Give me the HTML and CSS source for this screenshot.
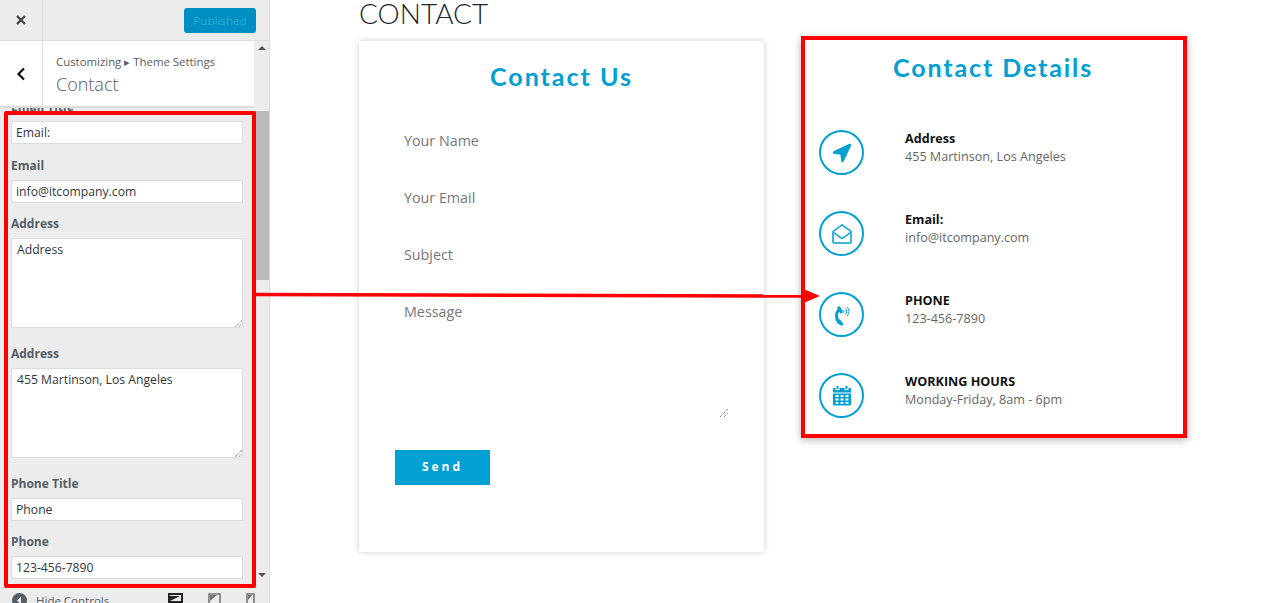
FILE: index.html
```html
<!DOCTYPE html>
<html lang="en">
<head>
    <meta charset="UTF-8">
    <title>Customizing Contact</title>
    <link rel="stylesheet" href="styles.css">
</head>
<body>
    <aside class="sidebar">
        <div class="topbar">
            <button class="close-btn">
                <svg width="12" height="12" viewBox="0 0 12 12"><path d="M2 2l8 8M10 2l-8 8" stroke="#444" stroke-width="2.2" fill="none"/></svg>
            </button>
            <div class="publish-wrap"><span class="publish-btn">Published</span></div>
        </div>
        <div class="panel">
            <div class="panel-main">
                <div class="section-head">
                    <div class="back-btn">
                        <svg width="10" height="14" viewBox="0 0 10 14"><path d="M8 1.5L2.5 7 8 12.5" stroke="#111" stroke-width="2.2" fill="none"/></svg>
                    </div>
                    <div class="section-title">
                        <div class="crumb">Customizing &#9656; Theme Settings</div>
                        <div class="section-name">Contact</div>
                    </div>
                </div>
                <div class="fields">
                    <label class="field-label">Email Title</label>
                    <div class="text-input">Email:</div>
                    <label class="field-label">Email</label>
                    <div class="text-input">info@itcompany.com</div>
                    <label class="field-label tight">Address</label>
                    <div class="text-area">Address
                        <svg class="grip" width="7" height="7" viewBox="0 0 8 8"><path d="M0 8l8-8M4 8l4-4" stroke="#555" stroke-dasharray="1 1" fill="none"/></svg>
                    </div>
                    <label class="field-label">Address</label>
                    <div class="text-area">455 Martinson, Los Angeles
                        <svg class="grip" width="7" height="7" viewBox="0 0 8 8"><path d="M0 8l8-8M4 8l4-4" stroke="#555" stroke-dasharray="1 1" fill="none"/></svg>
                    </div>
                    <label class="field-label">Phone Title</label>
                    <div class="text-input">Phone</div>
                    <label class="field-label tight">Phone</label>
                    <div class="text-input">123-456-7890</div>
                </div>
            </div>
            <div class="scrollbar">
                <span class="arrow-up"></span>
                <div class="scroll-track"><div class="scroll-thumb"></div></div>
                <span class="arrow-down"></span>
            </div>
        </div>
        <div class="sidebar-foot">
            <div class="hide-controls">
                <svg width="15" height="15" viewBox="0 0 15 15"><circle cx="7.5" cy="7.5" r="7.5" fill="#555d66"/><path d="M9 3.5L5 7.5l4 4z" fill="#eee"/></svg>
                <span>Hide Controls</span>
            </div>
            <div class="devices">
                <svg width="15" height="12" viewBox="0 0 15 12"><path d="M1 1h13v8H1z" fill="none" stroke="#222" stroke-width="2"/><path d="M2 8l10-5H2z" fill="#222"/><path d="M0 10.5h15" stroke="#222" stroke-width="2"/></svg>
                <svg width="13" height="12" viewBox="0 0 13 12"><path d="M1 1h11v10H1z" fill="none" stroke="#777" stroke-width="1.6"/><path d="M2 8l7-6H2z" fill="#777"/></svg>
                <svg width="9" height="12" viewBox="0 0 9 12"><path d="M1 1h7v10H1z" fill="none" stroke="#777" stroke-width="1.6"/><path d="M2 7l4-5H2z" fill="#777"/></svg>
            </div>
        </div>
    </aside>

    <main class="preview">
        <h2 class="page-title">CONTACT</h2>
        <div class="cards">
            <section class="form-card">
                <h3 class="card-title">Contact Us</h3>
                <div class="form-row">Your Name</div>
                <div class="form-row">Your Email</div>
                <div class="form-row">Subject</div>
                <div class="form-message">
                    Message
                    <svg class="grip" width="8" height="8" viewBox="0 0 8 8"><path d="M0 8l8-8M4 8l4-4" stroke="#555" stroke-dasharray="1 1" fill="none"/></svg>
                </div>
                <div class="send-btn">Send</div>
            </section>
            <section class="details-card">
                <h3 class="card-title">Contact Details</h3>
                <div class="detail-row">
                    <div class="icon-ring">
                        <svg width="22" height="22" viewBox="0 0 22 22"><path d="M19 3L3 10.500 10.500 11.500 11.500 19z" fill="#00a0d2" stroke="#00a0d2" stroke-width="2.500" stroke-linejoin="round"/></svg>
                    </div>
                    <div class="detail-text"><div class="detail-name">Address</div><div class="detail-value">455 Martinson, Los Angeles</div></div>
                </div>
                <div class="detail-row">
                    <div class="icon-ring">
                        <svg width="22" height="22" viewBox="0 0 22 22" fill="none" stroke="#00a0d2" stroke-width="1.500"><path d="M2 8.500L11 2l9 6.500V19a1 1 0 0 1-1 1H3a1 1 0 0 1-1-1z"/><path d="M2.500 9.500L11 15.500l8.500-6"/></svg>
                    </div>
                    <div class="detail-text"><div class="detail-name">Email:</div><div class="detail-value">info@itcompany.com</div></div>
                </div>
                <div class="detail-row">
                    <div class="icon-ring">
                        <svg width="22" height="22" viewBox="0 0 22 22" fill="none" stroke="#00a0d2"><path d="M8.500 5.500C4.500 8 4.500 16 9 19.500" stroke-width="3"/><path d="M8 4l2 3.500M8 17l2.500 3" stroke-width="3.400" stroke-linecap="round"/><path d="M12.500 6c.8.8.8 2 0 2.800M14.300 4.500c1.700 1.600 1.700 4.400 0 6M16 3c2.600 2.400 2.600 6.600 0 9" stroke-width="1"/></svg>
                    </div>
                    <div class="detail-text"><div class="detail-name">PHONE</div><div class="detail-value">123-456-7890</div></div>
                </div>
                <div class="detail-row">
                    <div class="icon-ring">
                        <svg width="20" height="20" viewBox="0 0 20 20"><path d="M4.500 0h2v3h-2zM13.500 0h2v3h-2z" fill="#00a0d2"/><path d="M1 2.500A1 1 0 0 1 2 2h1.500v2h4V2h5v2h4V2H18a1 1 0 0 1 1 1v3.500H1zM1 7.500h18V18a1.500 1.500 0 0 1-1.500 1.500h-15A1.500 1.500 0 0 1 1 18z" fill="#00a0d2"/><path d="M3.500 9h3v2h-3zM8.500 9h3v2h-3zM13.500 9h3v2h-3zM3.500 12.500h3v2h-3zM8.500 12.500h3v2h-3zM13.500 12.500h3v2h-3zM3.500 16h3v1.800h-3zM8.500 16h3v1.800h-3zM13.500 16h3v1.800h-3z" fill="#fff"/></svg>
                    </div>
                    <div class="detail-text"><div class="detail-name">WORKING HOURS</div><div class="detail-value">Monday-Friday, 8am - 6pm</div></div>
                </div>
            </section>
        </div>
    </main>

    <!-- red annotation on top of the screenshot -->
    <div class="note-box"></div>
    <svg class="note-arrow" width="570" height="20" viewBox="0 0 570 20"><path d="M0 8.500L550 10" stroke="#f00" stroke-width="3.500" fill="none"/><path d="M546 2l19 8-19 8z" fill="#f00"/></svg>
</body>
</html>
```

FILE: styles.css
```css
* {
    box-sizing: border-box;
}

html, body {
    height: 100%;
}

body {
    margin: 0;
    display: flex;
    height: 603px;
    overflow: hidden;
    background: #fff;
    font-family: "Open Sans", sans-serif;
    color: #444;
}

/* customizer sidebar */
.sidebar {
    width: 270px;
    flex-shrink: 0;
    display: flex;
    flex-direction: column;
    background: #ececec;
    border-right: 1px solid #ddd;
    font-size: 12.5px;
}

.topbar {
    height: 41px;
    display: flex;
    flex-shrink: 0;
    border-bottom: 1px solid #ddd;
}

.close-btn {
    width: 43px;
    padding: 0;
    border: 0;
    border-right: 1px solid #ddd;
    background: transparent;
    display: flex;
    align-items: center;
    justify-content: center;
}

.publish-wrap {
    flex: 1;
    display: flex;
    justify-content: flex-end;
    padding: 8px 13px 0 0;
}

.publish-btn {
    width: 72px;
    height: 25px;
    background: #008ec2;
    border-radius: 3px;
    color: #2fabd4;
    font-size: 11.6px;
    line-height: 25px;
    text-align: center;
}

.panel {
    flex: 1;
    display: flex;
    min-height: 0;
    overflow: hidden;
}

.panel-main {
    width: 254px;
    flex-shrink: 0;
}

.section-head {
    position: relative;
    z-index: 1;
    height: 67px;
    display: flex;
    background: #fff;
    border-bottom: 2px solid #ddd;
}

.back-btn {
    width: 43px;
    flex-shrink: 0;
    display: flex;
    align-items: center;
    justify-content: center;
    border-right: 1px solid #ddd;
}

.section-title {
    padding: 12px 0 0 13px;
}

.crumb {
    font-size: 11.4px;
    line-height: 18px;
    color: #555d66;
}

.section-name {
    font-size: 18px;
    font-weight: 300;
    line-height: 27px;
    color: #555d66;
}

.fields {
    margin-top: -23px;
    padding: 0 11px;
}

.field-label {
    display: block;
    margin-top: 13px;
    margin-bottom: 5px;
    height: 18px;
    font-size: 12px;
    font-weight: 700;
    line-height: 18px;
    color: #555d66;
}

.field-label.tight {
    margin-top: 12px;
}

.text-input, .text-area {
    width: 232px;
    border: 1px solid #ddd;
    background: #fff;
    color: #32373c;
    font-size: 12.2px;
    padding: 0 4px;
}

.text-input {
    height: 23px;
    line-height: 21px;
}

.text-area {
    position: relative;
    height: 90px;
    line-height: 20px;
    padding: 1px 5px 0;
}

.text-area + .field-label {
    margin-top: 17px;
}

.grip {
    position: absolute;
    right: 0;
    bottom: 0;
}

.scrollbar {
    width: 15px;
    display: flex;
    flex-direction: column;
    align-items: center;
}

.arrow-up, .arrow-down {
    flex-shrink: 0;
    width: 0;
    height: 0;
    border-left: 4px solid transparent;
    border-right: 4px solid transparent;
}

.arrow-up {
    margin: 5px 0 0;
    border-bottom: 4px solid #555;
}

.arrow-down {
    margin: 0 0 8px;
    border-top: 4px solid #555;
}

.scroll-track {
    flex: 1;
    width: 100%;
    padding-top: 61px;
}

.scroll-thumb {
    height: 169px;
    background: #bbb;
}

.sidebar-foot {
    height: 18px;
    flex-shrink: 0;
    display: flex;
    justify-content: space-between;
    padding: 0 14px 0 12px;
    font-size: 11.5px;
    color: #555d66;
    overflow: hidden;
}

.hide-controls {
    display: flex;
    gap: 9px;
    padding-top: 8px;
    line-height: 15px;
}

.devices {
    display: flex;
    gap: 25px;
    padding-top: 8px;
}

/* previewed page */
.preview {
    flex: 1;
    padding-left: 89px;
}

.page-title {
    margin: 0;
    height: 41px;
    font-family: "Lato", sans-serif;
    font-size: 28px;
    font-weight: 300;
    line-height: 27px;
    color: #1d2433;
}

.cards {
    display: flex;
    align-items: flex-start;
    gap: 37px;
}

.card-title {
    margin: 0;
    font-family: "Lato", sans-serif;
    font-size: 25px;
    font-weight: 700;
    letter-spacing: 2px;
    text-align: center;
    color: #00a0d2;
}

.form-card {
    width: 405px;
    height: 511px;
    padding: 20px 36px 0;
    background: #fff;
    box-shadow: 0 0 6px rgba(0, 0, 0, 0.2);
}

.form-row {
    height: 57px;
    padding-left: 9px;
    font-size: 14.3px;
    line-height: 20px;
    color: #777;
}

.form-row:first-of-type {
    margin-top: 40px;
}

.form-message {
    position: relative;
    height: 148px;
    padding-left: 9px;
    font-size: 14.3px;
    line-height: 20px;
    color: #777;
}

.form-message .grip {
    bottom: 33px;
}

.send-btn {
    width: 95px;
    height: 35px;
    background: #00a0d2;
    color: #fff;
    font-size: 12px;
    font-weight: 700;
    line-height: 34px;
    letter-spacing: 3px;
    text-align: center;
}

.details-card {
    width: 386px;
    height: 402px;
    margin-top: -5px;
    padding: 12px 14px 0;
    background: #fff;
    border: 4px solid #f00;
    box-shadow: 0 2px 8px rgba(0, 0, 0, 0.3);
}

.details-card .card-title {
    margin-bottom: 48px;
    letter-spacing: 1.9px;
    padding-right: 2px;
}

.detail-row {
    height: 81px;
    display: flex;
    align-items: flex-start;
    gap: 41px;
}

.detail-row:last-child {
    height: 45px;
}

.icon-ring {
    width: 45px;
    height: 45px;
    flex-shrink: 0;
    display: flex;
    align-items: center;
    justify-content: center;
    border: 2px solid #00a0d2;
    border-radius: 50%;
}

.detail-name {
    font-size: 12.6px;
    font-weight: 700;
    line-height: 18px;
    color: #111;
}

.detail-value {
    font-size: 12.6px;
    line-height: 18px;
    color: #666;
}

/* red annotation */
.note-box {
    position: absolute;
    left: 4px;
    top: 111px;
    width: 252px;
    height: 477px;
    border: 4px solid #f00;
    border-radius: 2px;
}

.note-arrow {
    position: absolute;
    left: 255px;
    top: 286px;
}
```
